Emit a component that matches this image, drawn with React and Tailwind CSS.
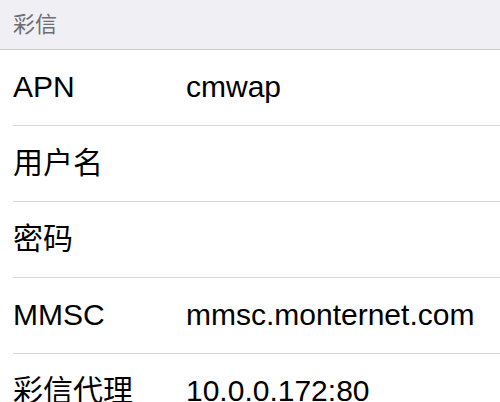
const rows = [
  { label: "APN", value: "cmwap" },
  { label: "用户名", value: "" },
  { label: "密码", value: "" },
  { label: "MMSC", value: "mmsc.monternet.com" },
  { label: "彩信代理", value: "10.0.0.172:80" },
];

const App = () => {
  return (
    <div
      className="h-[402px] w-[500px] overflow-hidden bg-white"
      style={{ fontFamily: '"Liberation Sans", "Noto Sans CJK SC", sans-serif' }}
    >
      <div className="flex h-[50px] items-center border-b border-[#c8c7cc] bg-[#efeff4] pl-[13px] text-[22px] text-[#6d6d72]">
        彩信
      </div>
      <div className="pl-[13px]">
        {rows.map((row) => (
          <div
            key={row.label}
            className="flex h-[76px] items-center border-b border-[#d6d6da] pb-[2px] text-[30px] text-black"
          >
            <span className="w-[173px] shrink-0">{row.label}</span>
            <span>{row.value}</span>
          </div>
        ))}
      </div>
    </div>
  );
};

export default App;
